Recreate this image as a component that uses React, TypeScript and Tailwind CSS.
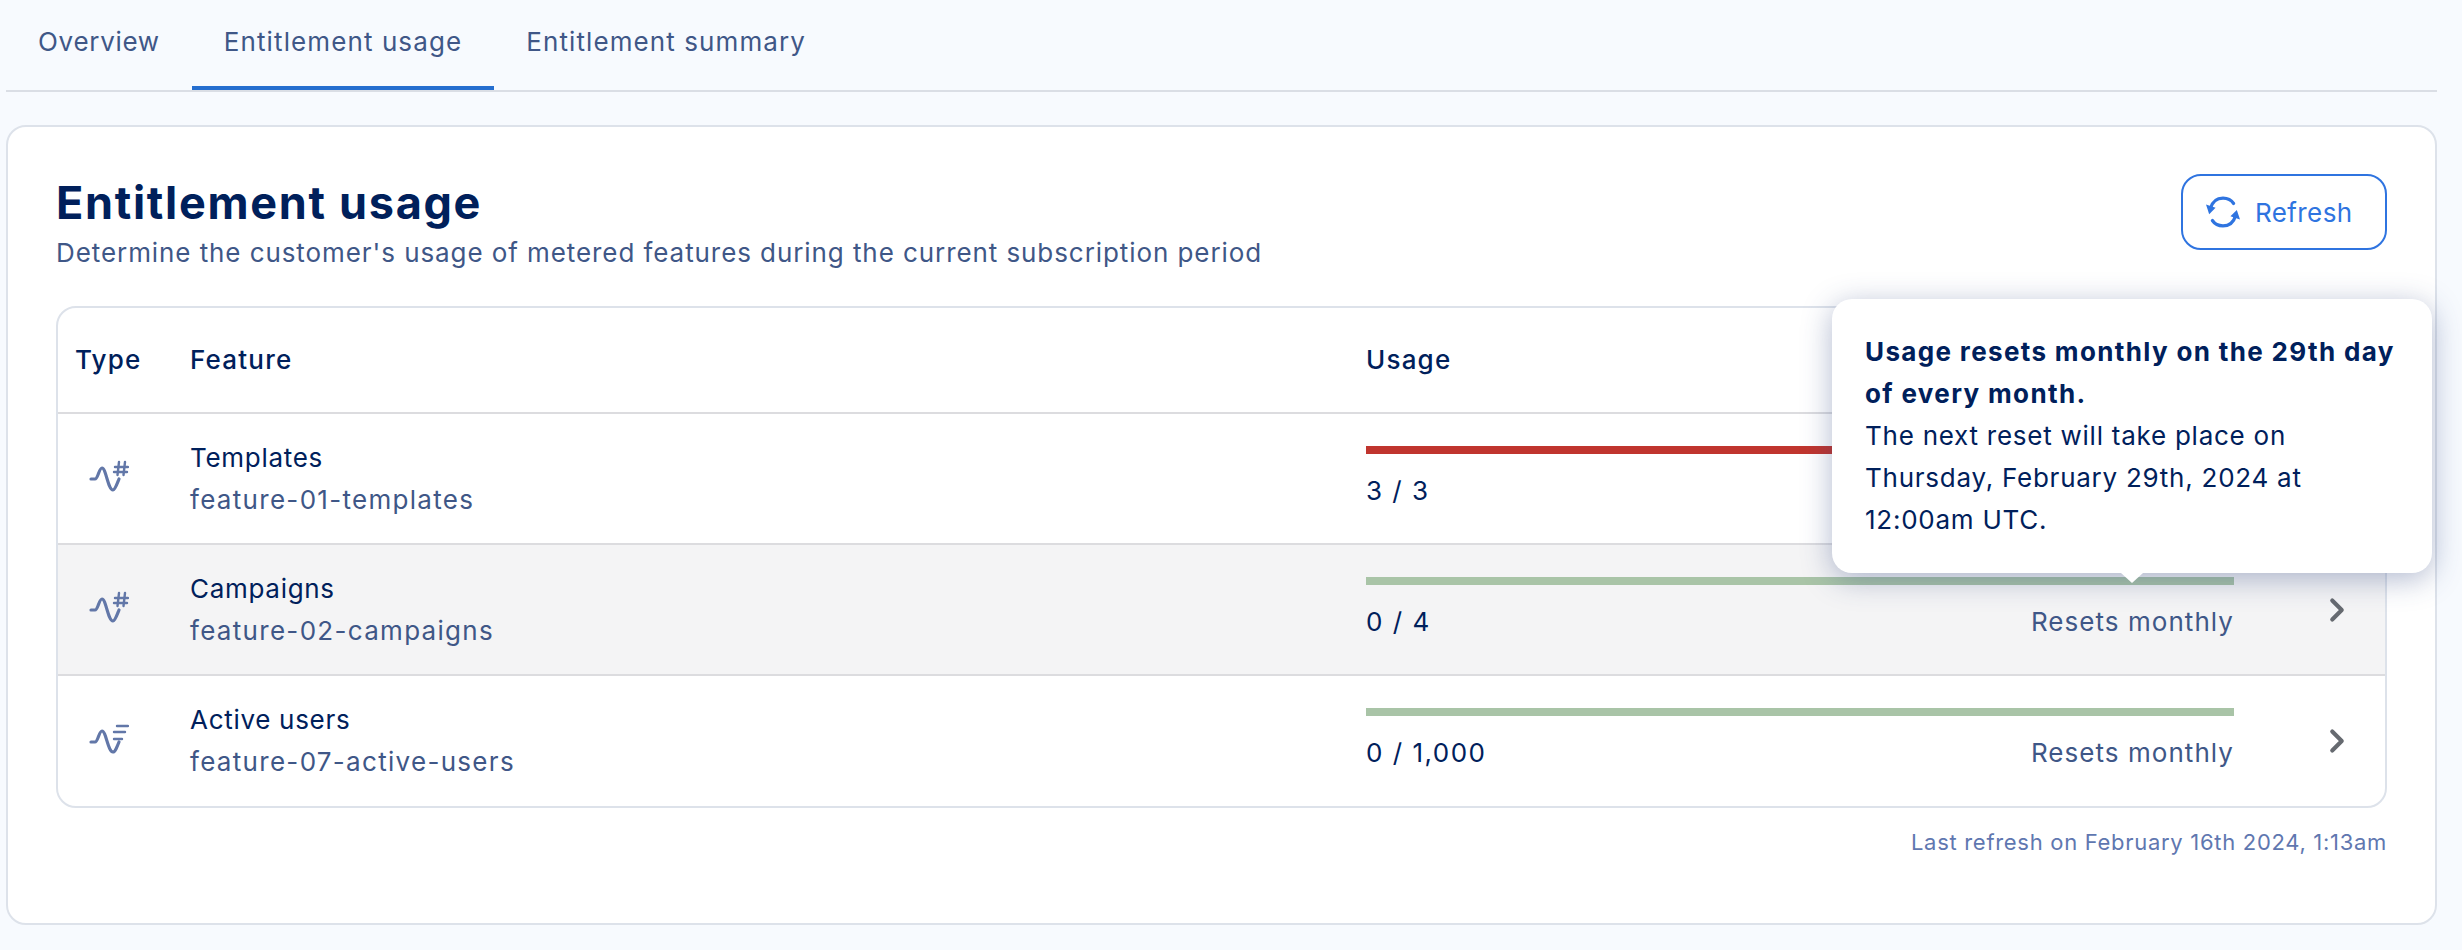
import React from 'react';
import { ChevronRight } from 'lucide-react';

const WaveHash: React.FC = () => (
  <svg width="40" height="34" viewBox="0 0 40 34" fill="none" stroke="#6277a8" strokeWidth="3.2" strokeLinecap="round" strokeLinejoin="round">
    <path d="M2 19h4c3 0 4-11 7-11 4 0 6 22 11 22 2 0 4-6 6-11" />
    <path d="M26 7h13M25 12h13M30 2l-1.5 13M36 2l-1.5 13" strokeWidth="2.4" />
  </svg>
);

const WaveLines: React.FC = () => (
  <svg width="40" height="34" viewBox="0 0 40 34" fill="none" stroke="#6277a8" strokeWidth="3.2" strokeLinecap="round" strokeLinejoin="round">
    <path d="M2 20h4c3 0 4-11 7-11 4 0 6 21 11 21 2 0 4-5 6-10" />
    <path d="M28 4h11M25 10h11M25 17h8" strokeWidth="2.4" />
  </svg>
);

const RefreshIcon: React.FC = () => (
  <svg width="34" height="34" viewBox="0 0 32 32" fill="none" stroke="#2f74e0" strokeWidth="3" strokeLinecap="round">
    <path d="M4 13C6 6 11 3 16 3c4 0 8 2 10 5" />
    <path d="M28 19c-2 7-7 10-12 10-4 0-8-2-10-5" />
    <path d="M0 9l9 3-6 6z" fill="#2f74e0" stroke="none" />
    <path d="M32 23l-9-3 6-6z" fill="#2f74e0" stroke="none" />
  </svg>
);

type Row = {
  name: string;
  slug: string;
  usage: string;
  bar: string;
  icon: React.ReactNode;
  hover?: boolean;
};

const rows: Row[] = [
  { name: 'Templates', slug: 'feature-01-templates', usage: '3 / 3', bar: 'bg-[#c0352e]', icon: <WaveHash /> },
  { name: 'Campaigns', slug: 'feature-02-campaigns', usage: '0 / 4', bar: 'bg-[#a9c4a7]', icon: <WaveHash />, hover: true },
  { name: 'Active users', slug: 'feature-07-active-users', usage: '0 / 1,000', bar: 'bg-[#a9c4a7]', icon: <WaveLines /> },
];

const App: React.FC = () => {
  return (
    <div className="min-h-[950px] bg-[#f7fafe] px-[6px] font-['Inter',sans-serif] text-[26px] leading-[42px] text-[#00205b]">
      <nav className="flex h-[92px] w-[2431px] border-b-2 border-[#dadee5] tracking-[1.1px] text-[#3f5787]">
        <div className="flex h-[90px] items-center px-[32px] pb-[6px] tracking-[0.7px]">Overview</div>
        <div className="flex h-[90px] items-center border-b-4 border-[#256ecf] px-[32px] pb-[2px]">Entitlement usage</div>
        <div className="flex h-[90px] items-center px-[32px] pb-[6px]">Entitlement summary</div>
      </nav>

      <div className="relative mt-[33px] h-[800px] w-[2431px] rounded-[20px] border-2 border-[#dde2ea] bg-white px-[48px] pt-[48px]">
        <div className="flex items-start justify-between">
          <div>
            <h1 className="text-[45px] font-bold leading-[56px] tracking-[1.7px]">Entitlement usage</h1>
            <p className="mt-px tracking-[0.92px] text-[#3f5787]">Determine the customer's usage of metered features during the current subscription period</p>
          </div>
          <button className="-mt-px flex h-[76px] w-[206px] items-center gap-[15px] rounded-[20px] border-2 border-[#2f74e0] pl-[23px] tracking-[0.4px] text-[#2f74e0]">
            <RefreshIcon />
            <span className="pt-px">Refresh</span>
          </button>
        </div>

        <div className="mt-[32px] overflow-hidden rounded-[20px] border-2 border-[#dde2ea]">
          <div className="grid h-[106px] grid-cols-[132px_1176px_868px_1fr] items-center border-b-2 border-[#dcdcdf] font-medium tracking-[1.2px]">
            <div className="pl-[17px]">Type</div>
            <div>Feature</div>
            <div>Usage</div>
            <div />
          </div>
          {rows.map((row, i) => (
            <div
              key={row.slug}
              className={`grid grid-cols-[132px_1176px_868px_1fr] ${i < rows.length - 1 ? 'h-[131px] border-b-2 border-[#dcdcdf]' : 'h-[130px]'} ${row.hover ? 'bg-[#f4f4f5]' : ''}`}
            >
              <div className="flex items-center pb-[4px] pl-[31px]">{row.icon}</div>
              <div className="flex flex-col justify-center">
                <div className="tracking-[0.7px]">{row.name}</div>
                <div className="tracking-[1.3px] text-[#3f5787]">{row.slug}</div>
              </div>
              <div className="pt-[32px]">
                <div className={`h-[8px] ${row.bar}`} />
                <div className="mt-[16px] flex justify-between">
                  <span className="tracking-[1.5px]">{row.usage}</span>
                  {i > 0 && <span className="tracking-[1.05px] text-[#3f5787]">Resets monthly</span>}
                </div>
              </div>
              <div className="flex items-center pl-[84px] text-[#666a70]">
                <ChevronRight size={38} strokeWidth={2.6} />
              </div>
            </div>
          ))}
        </div>

        <div className="mt-[16px] text-right text-[22px] leading-[36px] tracking-[0.7px] text-[#5f77b0]">
          Last refresh on February 16th 2024, 1:13am
        </div>

        <div className="absolute left-[1824px] top-[172px] h-[274px] w-[600px] rounded-[20px] bg-white pl-[33px] pt-[32px] shadow-[0_6px_30px_rgba(50,70,130,0.38)]">
          <div className="w-[540px] font-bold tracking-[1.35px]">Usage resets monthly on the 29th day of every month.</div>
          <div className="w-[500px] tracking-[0.75px]">The next reset will take place on Thursday, February 29th, 2024 at 12:00am UTC.</div>
          <div className="absolute left-[289px] top-[274px] border-x-[11px] border-t-[10px] border-x-transparent border-t-white" />
        </div>
      </div>
    </div>
  );
};

export default App;
